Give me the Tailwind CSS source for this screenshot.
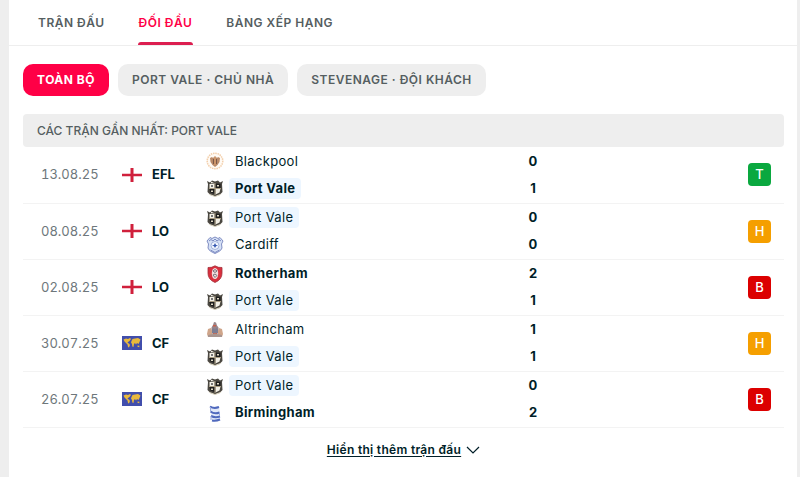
<!DOCTYPE html>
<html lang="vi">
<head>
  <meta charset="UTF-8" />
  <meta name="viewport" content="width=device-width, initial-scale=1.0" />
  <title>Đối đầu - Port Vale</title>
  <script src="https://cdn.jsdelivr.net/npm/@tailwindcss/browser@4"></script>
</head>

<body class="min-h-screen bg-[#eeeeee] pl-[9px] pr-[3px] font-[Inter,sans-serif] text-sm text-[#001e28]">

  <!-- Logo và cờ dùng chung -->
  <svg class="hidden">
    <symbol id="flag-eng" viewBox="0 0 20 14">
      <path fill="#fff" d="M0 0h20v14H0z" />
      <path fill="#d0203c" d="M8.500 0h3v14h-3zM0 5.700h20v2.600H0z" />
    </symbol>
    <symbol id="flag-world" viewBox="0 0 20 14">
      <path fill="#414eac" d="M0 0h20v14H0z" />
      <path fill="#e9b93c" d="M1.500 3.500L4 2.500l2 .5 2-1 1 1-1.500 2L6 6l-.5 1 1.500.5 1 1.500L7 11.500 6 11l-.5-2.500L4 7 2.500 5.500zM9.500 5l1-2L13 2.500 16 2l2.500 1.500L17.500 6l-1 2-1.500-1-1 1.500L13 7l-1 1-.5 3-1.200-.5L10 8 9 6.500zM15.500 9.500l2 .3-.3 1.500-1.700-.5z" />
    </symbol>
    <symbol id="port-vale" viewBox="0 0 18 18">
      <path fill="#4a4740" d="M1 2l3 1.500L6 1.500l3 1 3-1 2 2L17 2l-1 3 .5 8-3 3L9 17.500 4.500 16l-3-3L2 5z" />
      <path fill="#f3f0e6" d="M3.500 5l5-.5V9h-5zM9.500 9.500h5l-1 4-4 2zM5 2.800l3 .7-3 .7z" />
      <path fill="#1d1d1d" d="M9.500 4.500l5 .5v4h-5zM3.500 10h5v5l-4-1.500z" />
      <path stroke="#a89c82" stroke-width="1" d="M9 4v12M3 9.500h12" />
      <path fill="#777" d="M5 6h2v2H5z" />
      <path fill="#ddd6c2" d="M11 6h2v1.500h-2zM5 11.500h2V13H5zM2 14.500l3 1 4 1.500 4-1.500 3-1-2.500 2L9 18l-4.500-1.500z" />
    </symbol>
    <symbol id="blackpool" viewBox="0 0 18 18">
      <circle cx="9" cy="9" r="7.800" fill="#fffaf4" stroke="#f3cfab" stroke-width="1.500" stroke-dasharray="1.500 .8" />
      <path fill="#b98a69" d="M4 6l2-1 1 1 2-2 2 2 1-1 2 1-.5 4-2 3L9 15l-2.500-2-2-3z" />
      <path fill="#7a5847" d="M7 7h1v5H7zM10 7h1v5h-1z" />
      <path fill="#dfa06c" d="M8.500 5h1v8h-1z" />
    </symbol>
    <symbol id="cardiff" viewBox="0 0 18 18">
      <path fill="#d6e1f6" stroke="#7f8dc2" d="M4 1.500l2 1L9 1l3 1.500 2-1L17 5l-1.500 3 .5 4c-1 3-4 4-7 5.500C6 16 3 15 2 12l.5-4L1 5z" />
      <path fill="none" stroke="#7c8bc2" d="M3 5l2-1.500L7 5l2-2 2 2 2-1.500L15 5M4.500 14L9 16.500l4.500-2.500" />
      <circle cx="9" cy="9.500" r="4" fill="#f2f7ff" stroke="#a3b2da" />
      <path fill="#3557b0" d="M6 9.500l2-.5L9 7l1 2 2 .5-2 .8-1 1.700-1-1.700z" />
    </symbol>
    <symbol id="rotherham" viewBox="0 0 18 18">
      <path fill="#d9303e" stroke="#a1313b" stroke-width=".8" d="M2 2.500Q5.500 3 9 .8q3.500 2.200 7 1.700v6q0 6-7 9-7-3-7-9z" />
      <ellipse cx="9" cy="8.500" rx="3.200" ry="5.500" fill="#f2dddd" />
      <path fill="none" stroke="#77727c" d="M7 6l2-1.500L11 6 9 7.500zM7 10l2-1 2 1.500-2 2z" />
    </symbol>
    <symbol id="altrincham" viewBox="0 0 18 18">
      <path fill="#97858a" d="M8 1l2 .5 1 3 1.500 2v6h-7v-6L7 4z" />
      <path fill="#cfa58a" d="M2 8l3-1 1 3v5l-4 1-1-3zM16 8l-3-1-1 3v5l4 1 1-3z" />
      <path fill="#7d7d92" d="M6 8l2-1 1 2 1-2 2 1v4l-3 2-3-2z" />
      <path fill="#c65f4b" d="M7 4h3v1.500H7zM7 12h4v3H7z" />
      <path fill="#a9958f" d="M2 14l7-1.500 7 1.500v2H2z" />
    </symbol>
    <symbol id="birmingham" viewBox="0 0 18 18">
      <path fill="#e2e9f8" d="M4 2l9 1 1 5v8l-8 1-1-6z" />
      <path fill="none" stroke="#5069bd" stroke-width="2" d="M4 2.500q4 2.500 9 .5M4.500 7.500q4 3 9 1M5 12q4 2 9 .5M6 16.500q4 .8 8-1" />
      <path stroke="#9aaadf" d="M4.500 3v4M13.500 8v4M5 12v4" />
    </symbol>
  </svg>

  <main class="min-h-screen bg-white">

    <!-- Thanh tab -->
    <nav class="flex h-[46px] items-stretch gap-8 border-b border-[#eeeeee] px-7 text-xs font-semibold tracking-[0.5px] text-[#555e61]">
      <a href="#" class="flex items-center px-px">TRẬN ĐẤU</a>
      <a href="#" class="relative flex items-center px-px text-[#ff0046]">ĐỐI ĐẦU
        <span class="absolute inset-x-0 bottom-0 h-[3px] rounded-t-sm bg-[#dc1e50]"></span>
      </a>
      <a href="#" class="flex items-center px-px">BẢNG XẾP HẠNG</a>
    </nav>

    <!-- Bộ lọc -->
    <div class="flex gap-[9px] px-[14px] pt-[18px] text-xs font-semibold tracking-[0.5px] text-[#555e61]">
      <button class="h-8 rounded-[10px] bg-[#ff0046] px-[14px] font-bold text-white">TOÀN BỘ</button>
      <button class="h-8 rounded-[10px] bg-[#eeeeee] px-[14px]">PORT VALE · CHỦ NHÀ</button>
      <button class="h-8 rounded-[10px] bg-[#eeeeee] px-[14px]">STEVENAGE · ĐỘI KHÁCH</button>
    </div>

    <!-- Các trận gần nhất -->
    <section class="pl-[14px] pr-[13px] pt-[18px]">
      <h2 class="flex h-[33px] items-center rounded bg-[#eeeeee] px-[14px] text-xs font-medium text-[#555e61]">CÁC TRẬN GẦN NHẤT: PORT VALE</h2>

      <table class="w-full table-fixed border-collapse text-[13px]">
        <colgroup>
          <col class="w-[99px]" />
          <col class="w-[84px]" />
          <col />
          <col class="w-[60px]" />
          <col class="w-[221px]" />
        </colgroup>
        <tbody>
          <tr class="h-14 border-b border-[#f3f3f3]">
            <td class="pl-[18px] tabular-nums text-[#6e777b]">13.08.25</td>
            <td>
              <div class="flex items-center gap-[10px] font-bold"><svg class="h-[14px] w-5"><use href="#flag-eng" /></svg>EFL</div>
            </td>
            <td class="tracking-wide">
              <div class="flex h-[27px] items-center gap-[5px]"><svg class="size-[18px]"><use href="#blackpool" /></svg><span class="rounded px-[6px] leading-[21px]">Blackpool</span></div>
              <div class="flex h-[27px] items-center gap-[5px]"><svg class="size-[18px]"><use href="#port-vale" /></svg><span class="rounded bg-[#edf6ff] px-[6px] font-bold leading-[21px]">Port Vale</span></div>
            </td>
            <td class="text-center font-bold leading-[27px]">0<br />1</td>
            <td class="pr-[13px]"><div class="ml-auto flex size-[23px] items-center justify-center rounded bg-[#0aa83f] font-medium text-white">T</div></td>
          </tr>
          <tr class="h-14 border-b border-[#f3f3f3]">
            <td class="pl-[18px] tabular-nums text-[#6e777b]">08.08.25</td>
            <td>
              <div class="flex items-center gap-[10px] font-bold"><svg class="h-[14px] w-5"><use href="#flag-eng" /></svg>LO</div>
            </td>
            <td class="tracking-wide">
              <div class="flex h-[27px] items-center gap-[5px]"><svg class="size-[18px]"><use href="#port-vale" /></svg><span class="rounded bg-[#edf6ff] px-[6px] leading-[21px]">Port Vale</span></div>
              <div class="flex h-[27px] items-center gap-[5px]"><svg class="size-[18px]"><use href="#cardiff" /></svg><span class="rounded px-[6px] leading-[21px]">Cardiff</span></div>
            </td>
            <td class="text-center font-bold leading-[27px]">0<br />0</td>
            <td class="pr-[13px]"><div class="ml-auto flex size-[23px] items-center justify-center rounded bg-[#f59f00] font-medium text-white">H</div></td>
          </tr>
          <tr class="h-14 border-b border-[#f3f3f3]">
            <td class="pl-[18px] tabular-nums text-[#6e777b]">02.08.25</td>
            <td>
              <div class="flex items-center gap-[10px] font-bold"><svg class="h-[14px] w-5"><use href="#flag-eng" /></svg>LO</div>
            </td>
            <td class="tracking-wide">
              <div class="flex h-[27px] items-center gap-[5px]"><svg class="size-[18px]"><use href="#rotherham" /></svg><span class="rounded px-[6px] font-bold leading-[21px]">Rotherham</span></div>
              <div class="flex h-[27px] items-center gap-[5px]"><svg class="size-[18px]"><use href="#port-vale" /></svg><span class="rounded bg-[#edf6ff] px-[6px] leading-[21px]">Port Vale</span></div>
            </td>
            <td class="text-center font-bold leading-[27px]">2<br />1</td>
            <td class="pr-[13px]"><div class="ml-auto flex size-[23px] items-center justify-center rounded bg-[#dc0000] font-medium text-white">B</div></td>
          </tr>
          <tr class="h-14 border-b border-[#f3f3f3]">
            <td class="pl-[18px] tabular-nums text-[#6e777b]">30.07.25</td>
            <td>
              <div class="flex items-center gap-[10px] font-bold"><svg class="h-[14px] w-5"><use href="#flag-world" /></svg>CF</div>
            </td>
            <td class="tracking-wide">
              <div class="flex h-[27px] items-center gap-[5px]"><svg class="size-[18px]"><use href="#altrincham" /></svg><span class="rounded px-[6px] leading-[21px]">Altrincham</span></div>
              <div class="flex h-[27px] items-center gap-[5px]"><svg class="size-[18px]"><use href="#port-vale" /></svg><span class="rounded bg-[#edf6ff] px-[6px] leading-[21px]">Port Vale</span></div>
            </td>
            <td class="text-center font-bold leading-[27px]">1<br />1</td>
            <td class="pr-[13px]"><div class="ml-auto flex size-[23px] items-center justify-center rounded bg-[#f59f00] font-medium text-white">H</div></td>
          </tr>
          <tr class="h-14 border-b border-[#f3f3f3]">
            <td class="pl-[18px] tabular-nums text-[#6e777b]">26.07.25</td>
            <td>
              <div class="flex items-center gap-[10px] font-bold"><svg class="h-[14px] w-5"><use href="#flag-world" /></svg>CF</div>
            </td>
            <td class="tracking-wide">
              <div class="flex h-[27px] items-center gap-[5px]"><svg class="size-[18px]"><use href="#port-vale" /></svg><span class="rounded bg-[#edf6ff] px-[6px] leading-[21px]">Port Vale</span></div>
              <div class="flex h-[27px] items-center gap-[5px]"><svg class="size-[18px]"><use href="#birmingham" /></svg><span class="rounded px-[6px] font-bold leading-[21px]">Birmingham</span></div>
            </td>
            <td class="text-center font-bold leading-[27px]">0<br />2</td>
            <td class="pr-[13px]"><div class="ml-auto flex size-[23px] items-center justify-center rounded bg-[#dc0000] font-medium text-white">B</div></td>
          </tr>
        </tbody>
      </table>

      <!-- Xem thêm -->
      <div class="flex justify-center pt-3">
        <a href="#" class="flex items-center gap-[5px] text-xs font-semibold leading-5 tracking-wide">
          <span class="underline underline-offset-2">Hiển thị thêm trận đấu</span>
          <svg class="h-2 w-[14px]" viewBox="0 0 14 8" fill="none" stroke="#001e28" stroke-width="1.200"><path d="M1 1l6 6 6-6" /></svg>
        </a>
      </div>
    </section>

  </main>
</body>
</html>
